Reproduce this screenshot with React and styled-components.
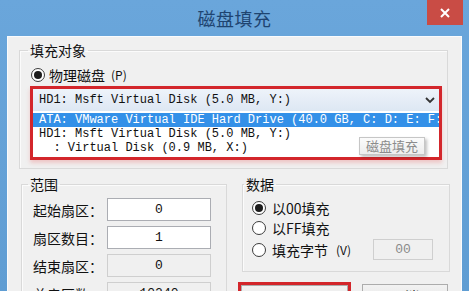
import { Fragment } from "react";
import styled, { createGlobalStyle } from "styled-components";

const GlobalStyle = createGlobalStyle`
  html, body {
    margin: 0;
    padding: 0;
  }
  body {
    width: 469px;
    height: 291px;
    overflow: hidden;
    background: #65a1d7;
    font-family: "Noto Sans CJK SC", "Noto Sans", sans-serif;
  }
`;

const Window = styled.div`
  width: 469px;
  height: 291px;
  overflow: hidden;
  display: flex;
  flex-direction: column;
  background: linear-gradient(#6aa6db, #5f9dd3);
`;

const TitleBar = styled.div`
  flex: none;
  height: 36px;
  display: grid;
  grid-template-columns: 1fr auto 1fr;
  align-items: start;
`;

const Title = styled.div`
  grid-column: 2;
  line-height: 36px;
  font-size: 18px;
  color: #1f4470;
  letter-spacing: 0.5px;
`;

const CloseButton = styled.div`
  grid-column: 3;
  justify-self: end;
  margin-right: 6px;
  width: 36px;
  height: 25px;
  background: #c94c45;
  display: flex;
  align-items: center;
  justify-content: center;
`;

const Client = styled.div`
  flex: 1;
  margin: 0 7px;
  padding-top: 5px;
  background: #f0f0f0;
  border: 1px solid #f9fbfd;
  border-bottom: none;
  display: flex;
  flex-direction: column;
  min-height: 0;
`;

const GroupBox = styled.fieldset`
  margin: 0;
  min-width: 0;
  border: 1px solid #d9d9d9;
  box-shadow: inset 1px 1px 0 #fbfbfb;
`;

const Legend = styled.legend`
  padding: 0 2px;
  margin-left: ${(p) => p.$shift}px;
  font-size: 14px;
  line-height: 16px;
  color: #111;
`;

const TargetGroup = styled(GroupBox)`
  margin: 0 13px 0 11px;
  padding: 8px 5px 8px 10px;
`;

const RadioRow = styled.label`
  display: flex;
  align-items: center;
  gap: ${(p) => p.$gap || 4}px;
  height: ${(p) => p.$h || 17}px;
  margin-left: ${(p) => p.$indent || 0}px;
  font-size: 14px;
  color: #111;
`;

const RadioCircle = styled.span`
  flex: none;
  box-sizing: border-box;
  width: 14px;
  height: 14px;
  border-radius: 50%;
  border: 1px solid #3c3c3c;
  background: #fff;
  display: grid;
  place-items: center;

  &::after {
    content: "";
    width: 8px;
    height: 8px;
    border-radius: 50%;
    background: ${(p) => (p.$checked ? "#1c1c1c" : "transparent")};
  }
`;

const Mnemonic = styled.span`
  font-size: 12px;
  margin-left: 2px;
`;

const Highlight = styled.div`
  position: relative;
  margin-top: 3px;
  border: 3px solid #d3262b;
  background: #fff;
  box-shadow: 0 3px 4px rgba(235, 120, 120, 0.35);
`;

const Combo = styled.div`
  height: 22px;
  display: flex;
  align-items: center;
  justify-content: space-between;
  padding: 0 4px 0 6px;
  background: linear-gradient(#eef3fa, #dde7f3);
  font-family: "Liberation Mono", "DejaVu Sans Mono", monospace;
  font-size: 12px;
  color: #111;
`;

const DiskList = styled.div`
  padding: 2px 0;
  font-family: "Liberation Mono", "DejaVu Sans Mono", monospace;
  font-size: 12px;
  color: #111;
`;

const DiskRow = styled.div`
  height: 14px;
  line-height: 14px;
  padding-left: 6px;
  white-space: pre;
  overflow: hidden;
  background: ${(p) => (p.$active ? "#3390e8" : "transparent")};
  color: ${(p) => (p.$active ? "#fff" : "#111")};
`;

const Tooltip = styled.div`
  position: absolute;
  top: 48px;
  right: 14px;
  width: 64px;
  height: 16px;
  border: 1px solid #c6c6c6;
  background: linear-gradient(#fbfbfb, #ededed);
  box-shadow: 2px 2px 3px rgba(0, 0, 0, 0.25);
  font-size: 13px;
  line-height: 16px;
  text-align: center;
  color: #8c8c8c;
`;

const BottomRow = styled.div`
  display: flex;
  align-items: flex-start;
  margin-top: 7px;
  padding-left: 13px;
`;

const RangeGroup = styled(GroupBox)`
  width: 206px;
  box-sizing: border-box;
  padding: 6px 0 10px 11px;
  display: grid;
  grid-template-columns: 74px 104px;
  row-gap: 5px;
  align-items: center;
`;

const FieldLabel = styled.span`
  font-size: 14px;
  color: #111;
`;

const NumberBox = styled.div`
  box-sizing: border-box;
  height: 23px;
  border: 1px solid ${(p) => (p.$disabled ? "#cfcfcf" : "#abadb3")};
  background: ${(p) => (p.$disabled ? "#f0f0f0" : "#fff")};
  color: ${(p) => (p.$muted ? "#8a8a8a" : "#111")};
  font-family: "Liberation Mono", "DejaVu Sans Mono", monospace;
  font-size: 13px;
  line-height: 21px;
  text-align: center;
`;

const RightColumn = styled.div`
  margin-left: 11px;
  width: 212px;
  display: flex;
  flex-direction: column;
`;

const DataGroup = styled(GroupBox)`
  margin-left: 4px;
  width: 208px;
  box-sizing: border-box;
  padding: 7px 16px 11px 9px;
  display: flex;
  flex-direction: column;
  gap: 3px;
`;

const ByteBox = styled(NumberBox)`
  width: 60px;
  height: 21px;
  line-height: 19px;
  margin-left: auto;
`;

const ButtonRow = styled.div`
  display: flex;
  align-items: flex-start;
  gap: 11px;
  margin-top: 10px;
`;

const ButtonMark = styled.div`
  width: 113px;
  box-sizing: border-box;
  border: 3px solid #d3262b;
`;

const Button = styled.div`
  box-sizing: border-box;
  width: ${(p) => p.$w || "100%"};
  margin-top: ${(p) => p.$top || 0}px;
  height: 24px;
  border: 1px solid #acacac;
  background: linear-gradient(#f2f2f2, #e3e3e3);
  font-size: 14px;
  line-height: 22px;
  text-align: center;
  color: #111;
`;

const disks = [
  { label: "ATA: VMware Virtual IDE Hard Drive (40.0 GB, C: D: E: F:)", active: true },
  { label: "HD1: Msft Virtual Disk (5.0 MB, Y:)" },
  { label: "  : Virtual Disk (0.9 MB, X:)" },
];

const ranges = [
  { label: "起始扇区：", value: "0" },
  { label: "扇区数目：", value: "1" },
  { label: "结束扇区：", value: "0", disabled: true },
  { label: "总扇区数：", value: "10240", disabled: true },
];

const App = () => (
  <>
    <GlobalStyle />
    <Window>
      <TitleBar>
        <Title>磁盘填充</Title>
        <CloseButton>
          <svg width="10" height="10" viewBox="0 0 10 10">
            <path d="M1 1 L9 9 M9 1 L1 9" stroke="#fff" strokeWidth="2" />
          </svg>
        </CloseButton>
      </TitleBar>
      <Client>
        <TargetGroup>
          <Legend $shift={-2}>填充对象</Legend>
          <RadioRow $indent={1}>
            <RadioCircle $checked />
            物理磁盘<Mnemonic>(P)</Mnemonic>
          </RadioRow>
          <Highlight>
            <Combo>
              <span>HD1: Msft Virtual Disk (5.0 MB, Y:)</span>
              <svg width="10" height="7" viewBox="0 0 10 7">
                <path d="M1 1 L5 5 L9 1" fill="none" stroke="#333" strokeWidth="1.8" />
              </svg>
            </Combo>
            <DiskList>
              {disks.map((d) => (
                <DiskRow key={d.label} $active={d.active}>
                  {d.label}
                </DiskRow>
              ))}
            </DiskList>
            <Tooltip>磁盘填充</Tooltip>
          </Highlight>
        </TargetGroup>
        <BottomRow>
          <RangeGroup>
            <Legend $shift={-5}>范围</Legend>
            {ranges.map((r) => (
              <Fragment key={r.label}>
                <FieldLabel>{r.label}</FieldLabel>
                <NumberBox $disabled={r.disabled}>{r.value}</NumberBox>
              </Fragment>
            ))}
          </RangeGroup>
          <RightColumn>
            <DataGroup>
              <Legend $shift={-8}>数据</Legend>
              <RadioRow $gap={6}>
                <RadioCircle $checked />
                以00填充
              </RadioRow>
              <RadioRow $gap={6}>
                <RadioCircle />
                以FF填充
              </RadioRow>
              <RadioRow $gap={6} $h={21}>
                <RadioCircle />
                填充字节<Mnemonic>(V)</Mnemonic>
                <ByteBox $disabled $muted>
                  00
                </ByteBox>
              </RadioRow>
            </DataGroup>
            <ButtonRow>
              <ButtonMark>
                <Button>开始填充</Button>
              </ButtonMark>
              <Button $w="86px" $top={2}>
                取消
              </Button>
            </ButtonRow>
          </RightColumn>
        </BottomRow>
      </Client>
    </Window>
  </>
);

export default App;
